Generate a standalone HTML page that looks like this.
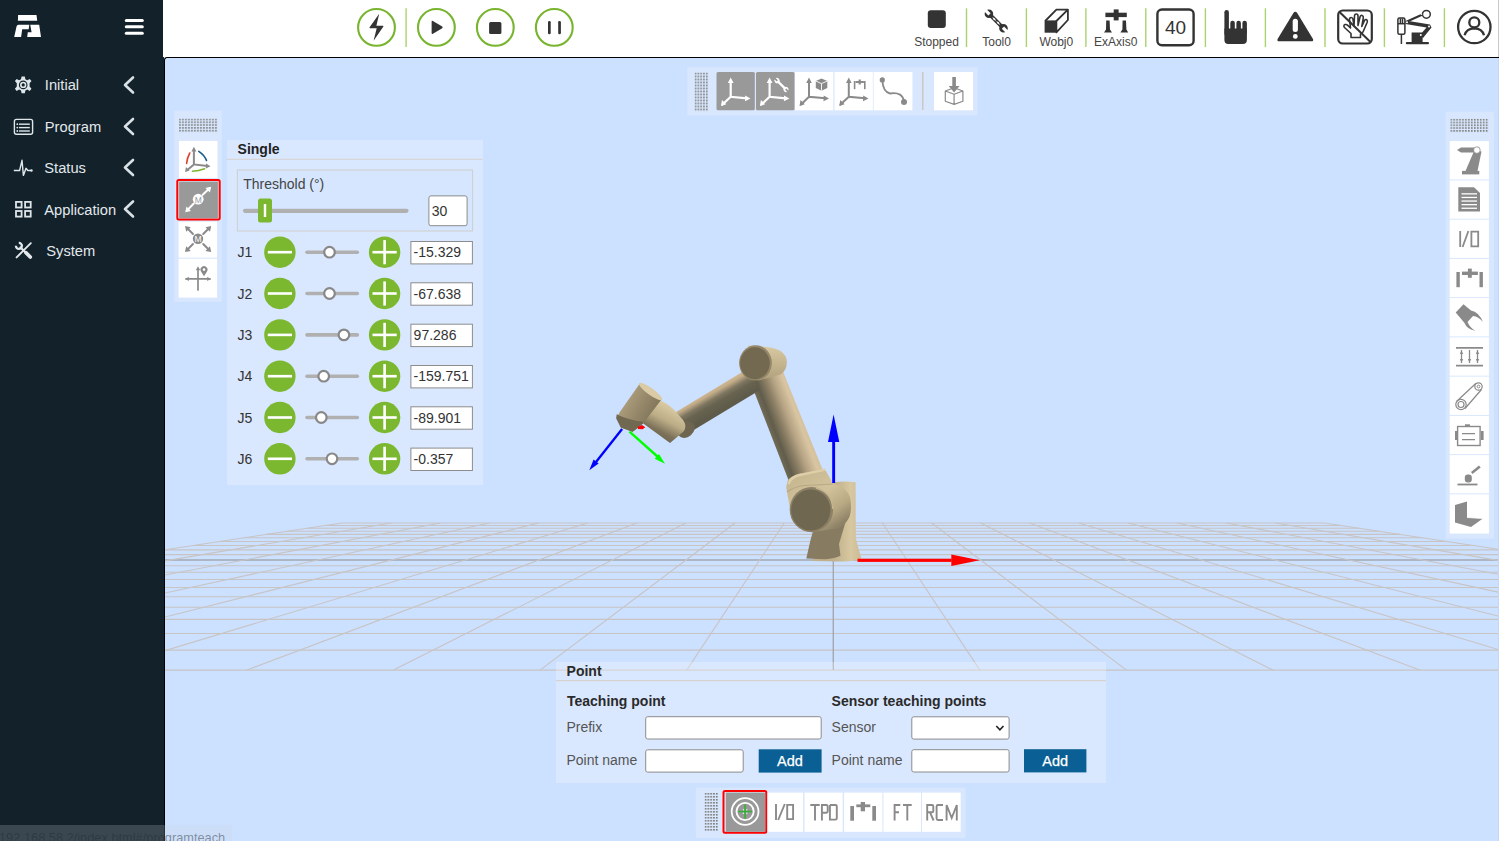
<!DOCTYPE html>
<html><head><meta charset="utf-8">
<style>
*{margin:0;padding:0;box-sizing:border-box}
html,body{width:1500px;height:841px;overflow:hidden;background:#fff;font-family:"Liberation Sans",sans-serif}
.abs{position:absolute}
svg{font-family:"Liberation Sans",sans-serif}
#side{position:absolute;left:0;top:0;width:164px;height:841px;background:#12212a}
#canvas{position:absolute;left:164px;top:57px;width:1335px;height:784px;background:#cce0ff;border-top:1px solid #000;border-left:1px solid #000;border-top-left-radius:3px}
</style></head><body>
<!-- SIDEBAR -->
<div id="side">
<svg class="abs" style="left:0;top:0" width="163" height="841">
 <g fill="#fff">
  <path d="M18.1,15.1 L36.5,15.1 L37.2,20.7 L17.9,20.7 Z"/>
  <path d="M14.2,37 L16.6,26.2 Q16.9,24.7 18.5,24.7 L29.3,24.7 L28.7,29.3 L22.2,29.3 L21.1,37 Z"/>
  <path d="M30.2,24.7 L39.2,24.7 L41,37 L27.2,37 L27.8,32.2 L31.6,32.2 Z"/>
 </g>
 <g stroke="#fff" stroke-width="3" stroke-linecap="round">
  <line x1="126.3" y1="20.4" x2="142.3" y2="20.4"/>
  <line x1="126.3" y1="26.8" x2="142.3" y2="26.8"/>
  <line x1="126.3" y1="33.3" x2="142.3" y2="33.3"/>
 </g>
 <g fill="none" stroke="#d9e1e6" stroke-width="2.6" stroke-linecap="round" stroke-linejoin="round">
  <polyline points="133,77.5 125,85 133,92.5"/>
  <polyline points="133,119 125,126.5 133,134"/>
  <polyline points="133,160 125,167.5 133,175"/>
  <polyline points="133,201.5 125,209 133,216.5"/>
 </g>
 <!-- gear -->
 <g transform="translate(23.2,84.9)" fill="#dfe6ea">
  <path id="gearp" d="M-1.6,-8.3 L1.6,-8.3 L2.2,-5.6 L4.1,-4.6 L6.5,-6 L8.3,-3.9 L6.4,-1.7 L6.4,1.7 L8.3,3.9 L6.5,6 L4.1,4.6 L2.2,5.6 L1.6,8.3 L-1.6,8.3 L-2.2,5.6 L-4.1,4.6 L-6.5,6 L-8.3,3.9 L-6.4,1.7 L-6.4,-1.7 L-8.3,-3.9 L-6.5,-6 L-4.1,-4.6 L-2.2,-5.6 Z"/>
  <circle r="4.3" fill="#12212a"/>
  <circle r="3.2" fill="#dfe6ea"/>
  <circle r="1.6" fill="#12212a"/>
 </g>
 <!-- program -->
 <g fill="none" stroke="#dfe6ea" stroke-width="1.4">
  <rect x="14.4" y="119.4" width="18.2" height="14.9" rx="2"/>
  <line x1="19" y1="124.2" x2="29.8" y2="124.2"/>
  <line x1="19" y1="127.6" x2="29.8" y2="127.6"/>
  <line x1="19" y1="131" x2="29.8" y2="131"/>
 </g>
 <g fill="#dfe6ea"><circle cx="17.3" cy="124.2" r="0.9"/><circle cx="17.3" cy="127.6" r="0.9"/><circle cx="17.3" cy="131" r="0.9"/></g>
 <!-- status -->
 <polyline fill="none" stroke="#dfe6ea" stroke-width="1.4" stroke-linejoin="round" points="13.8,170.5 19.6,170.5 22,160.3 23.4,175.4 26,168.3 27.8,170.5 31.5,170.5"/>
 <circle cx="31.5" cy="170.5" r="1.2" fill="#dfe6ea"/>
 <!-- application -->
 <g fill="none" stroke="#dfe6ea" stroke-width="1.8">
  <rect x="16" y="201.9" width="5.6" height="5.6"/>
  <rect x="25.1" y="201.9" width="5.6" height="5.6"/>
  <rect x="16" y="211" width="5.6" height="5.6"/>
  <rect x="25.1" y="211" width="5.6" height="5.6"/>
 </g>
 <!-- system tools -->
 <g stroke="#e2e8ec" stroke-linecap="round" fill="none">
  <line x1="30.8" y1="243.2" x2="16.6" y2="257.4" stroke-width="1.9"/>
  <line x1="20.5" y1="247.5" x2="30.5" y2="257.3" stroke-width="2.2"/>
  <line x1="25.8" y1="252.6" x2="30.3" y2="257.1" stroke-width="3.6"/>
 </g>
 <path d="M15.9,245.8 A3,3 0 1 0 18.8,242.9" fill="none" stroke="#e2e8ec" stroke-width="2.3"/>
 <g font-size="14.7" fill="#e2e8ec">
  <text x="44.8" y="90.3">Initial</text>
  <text x="44.8" y="131.7">Program</text>
  <text x="44.3" y="172.7">Status</text>
  <text x="44.3" y="214.8">Application</text>
  <text x="46.3" y="255.6">System</text>
 </g>
</svg>
</div>
<!-- TOPBAR -->
<svg class="abs" style="left:0;top:0" width="1500" height="57">
 <rect x="163" y="0" width="1337" height="57" fill="#fff"/>
 <line x1="1498.5" y1="0" x2="1498.5" y2="57" stroke="#c8c8c8" stroke-width="1"/>
 <g fill="none" stroke="#78b42e" stroke-width="2.1">
  <circle cx="376.5" cy="27.4" r="18.4"/>
  <circle cx="436.4" cy="27.4" r="18.4"/>
  <circle cx="495.3" cy="27.4" r="18.4"/>
  <circle cx="554.3" cy="27.4" r="18.4"/>
 </g>
 <g stroke="#a9d36e" stroke-width="1.4">
  <line x1="406.1" y1="8.2" x2="406.1" y2="47"/>
  <line x1="966.5" y1="8.3" x2="966.5" y2="47.1"/>
  <line x1="1026.4" y1="8.3" x2="1026.4" y2="47.1"/>
  <line x1="1085.9" y1="8.3" x2="1085.9" y2="47.1"/>
  <line x1="1145.8" y1="8.3" x2="1145.8" y2="47.1"/>
  <line x1="1205.4" y1="8.3" x2="1205.4" y2="47.1"/>
  <line x1="1265.4" y1="8.3" x2="1265.4" y2="47.1"/>
  <line x1="1325" y1="8.3" x2="1325" y2="47.1"/>
  <line x1="1384.4" y1="8.3" x2="1384.4" y2="47.1"/>
  <line x1="1444.4" y1="8.3" x2="1444.4" y2="47.1"/>
 </g>
 <g fill="#333">
  <path d="M379.2,13.8 L369.6,27.2 Q369.1,28.2 370.3,28.2 L376.7,28.2 L373.6,40.7 L383.4,26.6 Q383.9,25.7 382.7,25.7 L376.4,25.7 Z"/>
  <path d="M431.6,21.7 Q431.6,20.3 432.9,21 L442.2,26.6 Q443.2,27.4 442.2,28.2 L432.9,33.8 Q431.6,34.5 431.6,33.1 Z"/>
  <rect x="489.1" y="21.9" width="12.3" height="12.2" rx="1.5"/>
  <rect x="548" y="21" width="2.7" height="13.2" rx="1.3"/>
  <rect x="558.2" y="21" width="2.7" height="13.2" rx="1.3"/>
  <rect x="927.8" y="10.3" width="18" height="17.6" rx="3"/>
 </g>
 <g font-size="12" fill="#454545" text-anchor="middle">
  <text x="936.5" y="45.5">Stopped</text>
  <text x="996.6" y="45.5">Tool0</text>
  <text x="1056.3" y="45.5">Wobj0</text>
  <text x="1115.8" y="45.5">ExAxis0</text>
 </g>
 <!-- wrench -->
 <g transform="translate(996.2,21) rotate(-45)">
  <g fill="#333">
   <rect x="-1.9" y="-9" width="3.8" height="18"/>
   <circle cx="0" cy="-10.3" r="4.3"/>
   <circle cx="0" cy="10.3" r="4.3"/>
  </g>
  <g fill="#fff">
   <rect x="-1.6" y="-15.5" width="3.2" height="6"/>
   <rect x="-1.6" y="9.5" width="3.2" height="6"/>
   <path d="M0,-5.5 L0.9,-2.8 L0,0 L-0.9,-2.8 Z M0,0 L0.9,2.8 L0,5.5 L-0.9,2.8 Z"/>
  </g>
 </g>
 <!-- wobj box -->
 <g stroke="#333" stroke-width="1.8" fill="none" stroke-linejoin="round">
  <path d="M1045.2,21 L1056.4,9.6 L1067.9,9.6 L1067.9,20 L1056.4,32.3 L1056.4,21 L1067.9,9.6"/>
 </g>
 <rect x="1044.6" y="20.4" width="12.3" height="12.3" fill="#333"/>
 <!-- exaxis -->
 <g fill="#333">
  <rect x="1105.4" y="12.7" width="21.4" height="4.4"/>
  <rect x="1113.7" y="9.4" width="4.9" height="11"/>
  <path d="M1106.2,20.5 L1109.6,20.5 L1110,29.5 L1112,32.6 L1104,32.6 L1106,29.5 Z"/>
  <path d="M1122.6,20.5 L1126,20.5 L1126.4,29.5 L1128.2,32.6 L1120.4,32.6 L1122.4,29.5 Z"/>
 </g>
 <!-- 40 box -->
 <rect x="1157.4" y="9.5" width="36.2" height="35.8" rx="4.5" fill="none" stroke="#333" stroke-width="2.4"/>
 <text x="1175.5" y="33.6" font-size="19" fill="#333" text-anchor="middle">40</text>
 <!-- hand -->
 <g fill="#333">
  <rect x="1224.4" y="10" width="4.5" height="26" rx="2.2"/>
  <rect x="1230.3" y="20.8" width="4.5" height="14" rx="2.2"/>
  <rect x="1236.4" y="20.8" width="4.5" height="14" rx="2.2"/>
  <rect x="1242.4" y="20.8" width="4.5" height="14" rx="2.2"/>
  <path d="M1224.4,28.5 L1246.9,28.5 L1246.9,40 Q1246.9,44 1242.9,44 L1228.4,44 Q1224.4,44 1224.4,40 Z"/>
 </g>
 <!-- warning -->
 <path d="M1295.3,11.8 Q1296.4,11.8 1297.2,13 L1313,39 Q1313.8,41.3 1311.5,41.3 L1279,41.3 Q1276.7,41.3 1277.6,39 L1293.4,13 Q1294.2,11.8 1295.3,11.8 Z" fill="#333"/>
 <rect x="1292.7" y="18.8" width="5.2" height="13.2" rx="2.5" fill="#fff"/>
 <circle cx="1295.3" cy="36.4" r="2.4" fill="#fff"/>
 <!-- no hand -->
 <g fill="none" stroke="#333" stroke-linejoin="round">
  <rect x="1338.2" y="10.5" width="33.6" height="33" rx="4.5" stroke-width="2.2"/>
  <line x1="1339.5" y1="12" x2="1370.5" y2="42" stroke-width="2"/>
  <path d="M1351,37.5 L1351,33.5 L1344.5,27.5 Q1343,25.5 1345,24.6 Q1346.5,24 1348,25.6 L1350.5,28 L1349.5,19.5 Q1349.5,17.5 1351.2,17.5 Q1352.8,17.5 1353,19.5 L1354,26 L1354.5,16 Q1354.6,14 1356.3,14 Q1358,14 1358,16 L1358,25.5 L1360,17 Q1360.5,15 1362.2,15.5 Q1363.6,16 1363.3,18 L1361.8,26.5 L1364.5,20.5 Q1365.5,19 1366.8,19.8 Q1367.8,20.6 1367.2,22.2 L1363,32 L1360.5,34 L1360.5,37.5 Z" stroke-width="1.6"/>
 </g>
 <!-- robot teach -->
 <g fill="none" stroke="#333" stroke-width="1.5">
  <rect x="1397.9" y="18" width="7" height="16.2" rx="1.5"/>
  <line x1="1397.9" y1="23.7" x2="1404.9" y2="23.7"/>
  <line x1="1400.4" y1="18.5" x2="1400.4" y2="23.5"/>
  <line x1="1402.5" y1="18.5" x2="1402.5" y2="23.5"/>
  <line x1="1401.4" y1="34.2" x2="1401.4" y2="44"/>
  <circle cx="1426.4" cy="14.3" r="3.9"/>
  <line x1="1407" y1="21.5" x2="1422.5" y2="14.5" stroke-width="2"/>
 </g>
 <g fill="#333">
  <rect x="1405.8" y="42" width="23.2" height="2.2" rx="1"/>
  <rect x="1411.6" y="32.5" width="11" height="10"/>
  <path d="M1405.5,20.5 L1430,24.5 L1431.5,27.5 L1423,38 L1419.5,35.5 L1426.5,27.5 L1405.5,24 Z"/>
 </g>
 <g fill="#fff"><circle cx="1407" cy="22.2" r="1"/><circle cx="1429" cy="26.5" r="1"/><circle cx="1420.8" cy="35" r="1"/><circle cx="1421.5" cy="14.3" r="0.8"/></g>
 <!-- user -->
 <g fill="none" stroke="#333" stroke-width="2.3">
  <circle cx="1474.3" cy="27" r="16.2"/>
  <circle cx="1474.3" cy="22.4" r="5"/>
  <path d="M1464.6,35.2 Q1466.5,28.6 1474.3,28.4 Q1482.1,28.6 1484,35.2"/>
 </g>
</svg>
<!-- CANVAS -->
<div id="canvas"></div>
<div class="abs" style="left:1498px;top:58px;width:1px;height:783px;background:#c3d6f5"></div>
<svg class="abs" style="left:0;top:0" width="1500" height="841">
 <defs><clipPath id="cv"><rect x="165" y="58" width="1333" height="783"/></clipPath></defs>
 <g clip-path="url(#cv)">
<line x1="342.0" y1="523.02" x2="1324.6" y2="523.02" stroke="#c7c4c3" stroke-width="1.1"/>
<line x1="325.1" y1="525.57" x2="1341.5" y2="525.57" stroke="#c7c4c3" stroke-width="1.1"/>
<line x1="307.0" y1="528.30" x2="1359.6" y2="528.30" stroke="#c7c4c3" stroke-width="1.1"/>
<line x1="287.6" y1="531.23" x2="1379.0" y2="531.23" stroke="#c7c4c3" stroke-width="1.1"/>
<line x1="266.7" y1="534.39" x2="1399.9" y2="534.39" stroke="#c7c4c3" stroke-width="1.1"/>
<line x1="244.1" y1="537.80" x2="1422.5" y2="537.80" stroke="#c7c4c3" stroke-width="1.1"/>
<line x1="219.6" y1="541.49" x2="1447.0" y2="541.49" stroke="#c7c4c3" stroke-width="1.1"/>
<line x1="193.0" y1="545.50" x2="1473.6" y2="545.50" stroke="#c7c4c3" stroke-width="1.1"/>
<line x1="164.0" y1="549.88" x2="1502.6" y2="549.88" stroke="#c7c4c3" stroke-width="1.1"/>
<line x1="132.3" y1="554.67" x2="1534.3" y2="554.67" stroke="#c7c4c3" stroke-width="1.1"/>
<line x1="97.3" y1="559.94" x2="1569.3" y2="559.94" stroke="#a3a8b0" stroke-width="1.6"/>
<line x1="58.8" y1="565.76" x2="1607.8" y2="565.76" stroke="#c7c4c3" stroke-width="1.1"/>
<line x1="15.9" y1="572.22" x2="1650.7" y2="572.22" stroke="#c7c4c3" stroke-width="1.1"/>
<line x1="-31.9" y1="579.44" x2="1698.5" y2="579.44" stroke="#c7c4c3" stroke-width="1.1"/>
<line x1="-85.7" y1="587.56" x2="1752.3" y2="587.56" stroke="#c7c4c3" stroke-width="1.1"/>
<line x1="-146.7" y1="596.75" x2="1813.3" y2="596.75" stroke="#c7c4c3" stroke-width="1.1"/>
<line x1="-216.3" y1="607.25" x2="1882.9" y2="607.25" stroke="#c7c4c3" stroke-width="1.1"/>
<line x1="-296.5" y1="619.36" x2="1963.1" y2="619.36" stroke="#c7c4c3" stroke-width="1.1"/>
<line x1="-390.0" y1="633.46" x2="2056.6" y2="633.46" stroke="#c7c4c3" stroke-width="1.1"/>
<line x1="-500.4" y1="650.12" x2="2167.0" y2="650.12" stroke="#c7c4c3" stroke-width="1.1"/>
<line x1="-632.7" y1="670.08" x2="2299.3" y2="670.08" stroke="#c7c4c3" stroke-width="1.1"/>
<line x1="342.0" y1="523.02" x2="-632.7" y2="670.08" stroke="#c7c4c3" stroke-width="1.1"/>
<line x1="391.1" y1="523.02" x2="-486.1" y2="670.08" stroke="#c7c4c3" stroke-width="1.1"/>
<line x1="440.3" y1="523.02" x2="-339.5" y2="670.08" stroke="#c7c4c3" stroke-width="1.1"/>
<line x1="489.4" y1="523.02" x2="-192.9" y2="670.08" stroke="#c7c4c3" stroke-width="1.1"/>
<line x1="538.5" y1="523.02" x2="-46.3" y2="670.08" stroke="#c7c4c3" stroke-width="1.1"/>
<line x1="587.7" y1="523.02" x2="100.3" y2="670.08" stroke="#c7c4c3" stroke-width="1.1"/>
<line x1="636.8" y1="523.02" x2="246.9" y2="670.08" stroke="#c7c4c3" stroke-width="1.1"/>
<line x1="685.9" y1="523.02" x2="393.5" y2="670.08" stroke="#c7c4c3" stroke-width="1.1"/>
<line x1="735.0" y1="523.02" x2="540.1" y2="670.08" stroke="#c7c4c3" stroke-width="1.1"/>
<line x1="784.2" y1="523.02" x2="686.7" y2="670.08" stroke="#c7c4c3" stroke-width="1.1"/>
<line x1="882.4" y1="523.02" x2="979.9" y2="670.08" stroke="#c7c4c3" stroke-width="1.1"/>
<line x1="931.6" y1="523.02" x2="1126.5" y2="670.08" stroke="#c7c4c3" stroke-width="1.1"/>
<line x1="980.7" y1="523.02" x2="1273.1" y2="670.08" stroke="#c7c4c3" stroke-width="1.1"/>
<line x1="1029.8" y1="523.02" x2="1419.7" y2="670.08" stroke="#c7c4c3" stroke-width="1.1"/>
<line x1="1078.9" y1="523.02" x2="1566.3" y2="670.08" stroke="#c7c4c3" stroke-width="1.1"/>
<line x1="1128.1" y1="523.02" x2="1712.9" y2="670.08" stroke="#c7c4c3" stroke-width="1.1"/>
<line x1="1177.2" y1="523.02" x2="1859.5" y2="670.08" stroke="#c7c4c3" stroke-width="1.1"/>
<line x1="1226.3" y1="523.02" x2="2006.1" y2="670.08" stroke="#c7c4c3" stroke-width="1.1"/>
<line x1="1275.5" y1="523.02" x2="2152.7" y2="670.08" stroke="#c7c4c3" stroke-width="1.1"/>
<line x1="1324.6" y1="523.02" x2="2299.3" y2="670.08" stroke="#c7c4c3" stroke-width="1.1"/>
<line x1="833.3" y1="523.02" x2="833.3" y2="670.08" stroke="#a3a8b0" stroke-width="1.4"/>

<defs>
 <linearGradient id="gUA" gradientUnits="userSpaceOnUse" x1="765" y1="426" x2="802" y2="412">
  <stop offset="0" stop-color="#77705a"/><stop offset="0.2" stop-color="#615d4b"/><stop offset="0.42" stop-color="#8d8066"/><stop offset="0.6" stop-color="#b4a283"/><stop offset="0.85" stop-color="#d9c5a1"/><stop offset="1" stop-color="#d2bf9b"/>
 </linearGradient>
 <linearGradient id="gFA" gradientUnits="userSpaceOnUse" x1="711" y1="388" x2="723" y2="409">
  <stop offset="0" stop-color="#d7bf98"/><stop offset="0.22" stop-color="#c2ab87"/><stop offset="0.45" stop-color="#7d7560"/><stop offset="0.65" stop-color="#67634f"/><stop offset="1" stop-color="#5e5b4a"/>
 </linearGradient>
 <linearGradient id="gBase" gradientUnits="userSpaceOnUse" x1="834" y1="0" x2="862" y2="0">
  <stop offset="0" stop-color="#c0b08b"/><stop offset="0.6" stop-color="#d8c8a1"/><stop offset="1" stop-color="#cbbb94"/>
 </linearGradient>
 <linearGradient id="gSH" gradientUnits="userSpaceOnUse" x1="800" y1="478" x2="835" y2="528">
  <stop offset="0" stop-color="#c9b992"/><stop offset="0.4" stop-color="#d3c39c"/><stop offset="0.75" stop-color="#b8a983"/><stop offset="1" stop-color="#8e8267"/>
 </linearGradient>
 <linearGradient id="gEl" gradientUnits="userSpaceOnUse" x1="0" y1="346" x2="0" y2="378">
  <stop offset="0" stop-color="#d9c9a2"/><stop offset="1" stop-color="#b3a47f"/>
 </linearGradient>
 <linearGradient id="gW1" gradientUnits="userSpaceOnUse" x1="668" y1="404" x2="652" y2="435">
  <stop offset="0" stop-color="#dccca4"/><stop offset="0.45" stop-color="#bcad87"/><stop offset="0.8" stop-color="#7d7259"/><stop offset="1" stop-color="#6f6751"/>
 </linearGradient>
 <linearGradient id="gW2" gradientUnits="userSpaceOnUse" x1="624" y1="396" x2="652" y2="412">
  <stop offset="0" stop-color="#b1a27f"/><stop offset="0.5" stop-color="#9a8c6d"/><stop offset="1" stop-color="#85795e"/>
 </linearGradient>
</defs>
<!-- base column -->
<path d="M833.7,482.3 Q844.5,480.8 855.6,482.3 L855.8,538 Q858.5,549 861.2,557.5 Q860,561.3 840,561.6 L812,561 L830,540 Z" fill="url(#gBase)"/>
<!-- neck -->
<path d="M806.3,558.5 L810.5,540 L813,531 L846,520.5 L839,544 L840.5,555.8 Q835,558.5 825,559.3 Z" fill="#877c61"/>
<!-- upper arm -->
<path d="M745.8,370 L782.4,370 L826,478 L790,484 Z" fill="url(#gUA)"/>
<!-- housing + collar -->
<path d="M786.2,487.6 L787.5,481 Q790,476 800,473.5 L824.7,469 L833.2,483.8 Q846,486 850.3,498 Q852,510 849.4,517 Q845,526 837,528.4 L812,532 L792,520 Z" fill="url(#gSH)"/>
<path d="M788.5,484 Q791,476.5 801,474.8 L825.5,469.6" fill="none" stroke="#dfcfa9" stroke-width="2.4"/>
<path d="M787,492 Q795,486 806,485.5 L833,484" fill="none" stroke="#a89a78" stroke-width="1.2" opacity="0.6"/>
<!-- shoulder disk -->
<ellipse cx="811.4" cy="509.6" rx="21.7" ry="22.6" fill="#8c8066"/>
<ellipse cx="810.8" cy="510" rx="19.6" ry="20.6" fill="#6f6750"/>
<path d="M816,488 Q832,492 832.8,509" fill="none" stroke="#c7b791" stroke-width="1.3"/>
<!-- forearm -->
<path d="M674,413.2 L748,368.6 L760,390 L688,433.5 Z" fill="url(#gFA)"/>
<!-- elbow housing -->
<path d="M748,345.4 L768.6,347.2 Q785.5,349.5 786.9,361 Q787,371 780.5,374.5 L758,380.5 Z" fill="url(#gEl)"/>
<ellipse cx="755.5" cy="362.9" rx="16.4" ry="17.7" fill="#95876a"/>
<ellipse cx="754.9" cy="363.2" rx="14.8" ry="16" fill="#726950"/>
<!-- wrist1 -->
<ellipse cx="686" cy="429.5" rx="9.5" ry="7.5" transform="rotate(-40 686 429.5)" fill="#6e6550"/>
<path d="M643.3,399.5 L660,400.3 Q669,404 675.8,411.7 L683,420 Q687.5,426 683.5,431.5 L676,438 L670,443 L643.3,423.5 Z" fill="url(#gW1)"/>
<!-- wrist2 -->
<path d="M640,383.3 L661.7,399.2 L643.3,423.3 L635,430 L632.5,431.7 L620.8,427.5 L616.2,418.3 L620,411.7 Z" fill="url(#gW2)"/>
<path d="M616.7,414.2 Q628,420 643.3,421.7 L643.3,423.3 L635,430 L632.5,431.7 L620.8,427.5 L616.2,418.3 Z" fill="#716851"/>
<ellipse cx="650.6" cy="391.5" rx="14" ry="3.4" transform="rotate(36 650.6 391.5)" fill="#dbcba4"/>
<!-- tcp axes -->
<line x1="622.1" y1="429" x2="596" y2="462" stroke="#0000ff" stroke-width="2.3"/>
<path d="M589.3,470.3 L593.6,459.6 L598.6,463.6 Z" fill="#0000ff"/>
<line x1="629.5" y1="431.6" x2="658" y2="457" stroke="#00ff00" stroke-width="2.4"/>
<path d="M665,463.7 L654.6,458.7 L659,453.9 Z" fill="#00ff00"/>
<path d="M637.6,427 L642,425 L645.3,427.3 L642.5,429.3 L638,429 Z" fill="#ff0000"/>
<!-- base axes -->
<rect x="832.2" y="440" width="2.9" height="43" fill="#0000ff"/>
<path d="M833.6,414.5 L839.3,442 L828,442 Z" fill="#0000ff"/>
<rect x="857.5" y="558.7" width="94" height="3.2" fill="#ff0000"/>
<path d="M979.7,560.3 L951.3,554.5 L951.3,565.9 Z" fill="#ff0000"/>
 </g>
</svg>
<!-- PANELS -->
<svg class="abs" style="left:0;top:0" width="1500" height="841">
 <defs>
  <pattern id="gripH" x="179.2" y="118.6" width="3" height="2.8" patternUnits="userSpaceOnUse"><rect x="0" y="0" width="1.6" height="1.7" fill="#7e7e7e"/></pattern>
  <pattern id="gripR" x="1450.4" y="118.8" width="2.95" height="2.8" patternUnits="userSpaceOnUse"><rect x="0" y="0" width="1.6" height="1.7" fill="#7e7e7e"/></pattern>
  <pattern id="gripT" x="694.7" y="72.6" width="2.8" height="3" patternUnits="userSpaceOnUse"><rect x="0" y="0" width="1.7" height="1.6" fill="#7e7e7e"/></pattern>
  <pattern id="gripB" x="704.7" y="793" width="2.8" height="3" patternUnits="userSpaceOnUse"><rect x="0" y="0" width="1.7" height="1.6" fill="#7e7e7e"/></pattern>
 </defs>
 <!-- top toolbar -->
 <rect x="687.2" y="67.2" width="290.4" height="48.2" fill="#d8e7fd"/>
 <rect x="694.5" y="72.5" width="13.6" height="38.6" fill="url(#gripT)"/>
 <rect x="716.5" y="72" width="38.3" height="38.3" rx="1.5" fill="#999"/>
 <rect x="756" y="72" width="38.5" height="38.3" rx="1.5" fill="#999"/>
 <rect x="795" y="72" width="38.3" height="38.3" fill="#fff"/>
 <rect x="834.5" y="72" width="38.3" height="38.3" fill="#fff"/>
 <rect x="873.6" y="72" width="38.8" height="38.3" fill="#fff"/>
 <line x1="922.8" y1="72" x2="922.8" y2="110" stroke="#c9c3b9" stroke-width="1.3"/>
 <rect x="934" y="72" width="39.1" height="38.3" fill="#fff"/>
 <!-- axis icons -->
 <g stroke="#fff" stroke-width="2.2" fill="none" stroke-linecap="round">
  <path d="M730.7,81 L730.7,96.8 L747,98.3 M730.7,96.8 L722.5,104.5"/>
  <path d="M769.6,81 L769.6,96.8 L786,98.3 M769.6,96.8 L761.5,104.5"/>
 </g>
 <g fill="#fff">
  <path d="M730.7,77.5 L733.6,83 L727.8,83 Z M750.5,98.6 L745,101.3 L745.2,95.5 Z M721,106 L722,100 L726.3,104.2 Z"/>
  <path d="M769.6,77.5 L772.5,83 L766.7,83 Z M789.4,98.6 L783.9,101.3 L784.1,95.5 Z M759.9,106 L760.9,100 L765.2,104.2 Z"/>
 </g>
 <g transform="translate(781.5,85) rotate(-45)">
  <rect x="-1.1" y="-5.5" width="2.2" height="11" fill="#fff"/>
  <circle cx="0" cy="-6.3" r="2.6" fill="#fff"/>
  <circle cx="0" cy="6.3" r="2.6" fill="#fff"/>
  <rect x="-0.9" y="-9.5" width="1.8" height="3.6" fill="#999"/>
  <rect x="-0.9" y="5.9" width="1.8" height="3.6" fill="#999"/>
 </g>
 <g stroke="#8a8a8a" stroke-width="2" fill="none" stroke-linecap="round">
  <path d="M809,81 L809,96.8 L825.5,98.3 M809,96.8 L801,104.5"/>
  <path d="M848.8,81 L848.8,96.8 L865,98.3 M848.8,96.8 L840.5,104.5"/>
 </g>
 <g fill="#8a8a8a">
  <path d="M809,77.5 L811.8,83 L806.2,83 Z M829,98.6 L823.5,101.2 L823.7,95.6 Z M799.5,106 L800.5,100 L804.8,104.2 Z"/>
  <path d="M848.8,77.5 L851.6,83 L846,83 Z M868.5,98.6 L863,101.2 L863.2,95.6 Z M839.3,106 L840.3,100 L844.6,104.2 Z"/>
  <path d="M815.8,81 L821.5,78.6 L827.3,81 L827.3,88 L821.5,90.7 L815.8,88 Z"/>
 </g>
 <path d="M815.8,81 L821.5,83.6 L827.3,81 M821.5,83.6 L821.5,90.7" stroke="#fff" stroke-width="0.9" fill="none"/>
 <g fill="#8a8a8a">
  <rect x="853.8" y="81" width="1.6" height="8.2"/>
  <rect x="864" y="81" width="1.6" height="8.2"/>
  <rect x="855.5" y="81" width="8.4" height="2"/>
  <rect x="858.6" y="79.5" width="2.2" height="5"/>
 </g>
 <path d="M882.3,80 Q883,92 890,93.5 Q903,91.5 904,102" fill="none" stroke="#8a8a8a" stroke-width="1.8"/>
 <circle cx="882.3" cy="79.9" r="2.6" fill="#8a8a8a"/>
 <circle cx="904" cy="102" r="3" fill="#8a8a8a"/>
 <g fill="none" stroke="#8a8a8a" stroke-width="1.2" stroke-linejoin="round">
  <path d="M945.3,91 L954.1,87.8 L962.9,91 L962.9,101.2 L954.1,104.4 L945.3,101.2 Z M945.3,91 L954.1,94.3 L962.9,91 M954.1,94.3 L954.1,104.4"/>
 </g>
 <path d="M952.3,77 L955.9,77 L955.9,86 L959.5,86 L954.1,92.5 L948.7,86 L952.3,86 Z" fill="#8a8a8a"/>

 <!-- left tool panel -->
 <rect x="174.3" y="110.7" width="47.6" height="191.2" fill="#d8e7fd"/>
 <rect x="179" y="118.5" width="38.6" height="13.6" fill="url(#gripH)"/>
 <rect x="179" y="140.9" width="38.5" height="37" fill="#fff"/>
 <rect x="177.3" y="180.1" width="42.4" height="39.5" rx="1.5" fill="#dfe9f7" stroke="#ff0000" stroke-width="2"/>
 <rect x="179.1" y="181.6" width="38.8" height="36.6" fill="#999"/>
 <rect x="178.6" y="221.6" width="38.5" height="36" fill="#fff"/>
 <rect x="178.6" y="258.7" width="38.5" height="38.9" fill="#fff"/>
 <g stroke="#8a8a8a" stroke-width="2" fill="none" stroke-linecap="round">
  <path d="M193.9,150 L193.9,164.4 L207.5,165.9 M193.9,164.4 L187,170.3"/>
 </g>
 <g fill="#8a8a8a"><path d="M193.9,146.8 L196.4,151.5 L191.4,151.5 Z M210.5,166.2 L205.8,168.5 L206,163.5 Z M185,172 L186,167 L189.5,170.5 Z"/></g>
 <path d="M189.8,153 Q187,158 186.6,163.5" fill="none" stroke="#d9452b" stroke-width="1.6" stroke-linecap="round"/>
 <path d="M198.8,151.3 Q204.5,155 206.5,160.5" fill="none" stroke="#1a5e8e" stroke-width="1.6" stroke-linecap="round"/>
 <path d="M192.5,171.3 Q199,171.2 204.5,168.8" fill="none" stroke="#7ab62f" stroke-width="1.6" stroke-linecap="round"/>
 <g stroke="#fff" stroke-width="1.9" stroke-linecap="round">
  <line x1="187" y1="210.5" x2="193.8" y2="203.5"/>
  <line x1="202.7" y1="194.8" x2="209.5" y2="188.3"/>
 </g>
 <g fill="#fff"><path d="M185.2,212.3 L186.5,206.5 L191,211 Z M211.2,186.7 L209.9,192.5 L205.4,188 Z"/></g>
 <circle cx="198.2" cy="199.2" r="5.4" fill="#fff"/>
 <text x="198.2" y="202.6" font-size="8.5" fill="#999" text-anchor="middle">M</text>
 <g stroke="#8a8a8a" stroke-width="1.9" stroke-linecap="round">
  <line x1="187.5" y1="228.5" x2="193" y2="234"/>
  <line x1="208.7" y1="228.5" x2="203.2" y2="234"/>
  <line x1="187.5" y1="249.5" x2="193" y2="244"/>
  <line x1="208.7" y1="249.5" x2="203.2" y2="244"/>
 </g>
 <g fill="#8a8a8a">
  <path d="M185,226 L190.8,227.2 L186.2,231.8 Z M211.2,226 L205.4,227.2 L210,231.8 Z M185,252.1 L190.8,250.9 L186.2,246.3 Z M211.2,252.1 L205.4,250.9 L210,246.3 Z"/>
  <circle cx="198" cy="238.8" r="5.2"/>
 </g>
 <text x="198" y="242.2" font-size="8.5" fill="#fff" text-anchor="middle">M</text>
 <g stroke="#8a8a8a" stroke-width="1.7" stroke-linecap="round">
  <line x1="198" y1="268.5" x2="198" y2="290"/>
  <line x1="186" y1="278.9" x2="210" y2="278.9"/>
 </g>
 <g fill="#8a8a8a"><path d="M198,266.3 L200.2,270.3 L195.8,270.3 Z M185.3,278.9 L188.8,276.8 L188.8,281 Z M210.7,278.9 L207.2,276.8 L207.2,281 Z"/>
  <path d="M204,276.3 L201,271.5 A3.5,3.5 0 1 1 207,271.5 Z"/></g>
 <circle cx="204" cy="269.6" r="1.3" fill="#fff"/>

 <!-- right toolbar -->
 <rect x="1445.7" y="111.6" width="48.3" height="427" fill="#d8e7fd"/>
 <rect x="1450.3" y="118.7" width="38" height="13.6" fill="url(#gripR)"/>
 <g fill="#fff">
  <rect x="1449.7" y="141.1" width="39.2" height="38.3"/>
  <rect x="1449.7" y="180.4" width="39.2" height="38.3"/>
  <rect x="1449.7" y="219.6" width="39.2" height="38.3"/>
  <rect x="1449.7" y="258.9" width="39.2" height="38.3"/>
  <rect x="1449.7" y="298.1" width="39.2" height="38.3"/>
  <rect x="1449.7" y="337.4" width="39.2" height="38.3"/>
  <rect x="1449.7" y="376.6" width="39.2" height="38.3"/>
  <rect x="1449.7" y="415.9" width="39.2" height="38.3"/>
  <rect x="1449.7" y="455.1" width="39.2" height="38.3"/>
  <rect x="1449.7" y="494.4" width="39.2" height="39.2"/>
 </g>
 <g fill="#8a8a8a">
  <!-- robot -->
  <rect x="1462" y="170.9" width="17.3" height="3.5"/>
  <path d="M1465.5,171 L1474.5,150 L1481.5,151.5 L1477.5,171 Z"/>
  <path d="M1457,150 L1461,147.5 L1477,147.5 L1477,152.6 L1461,152.6 Z"/>
  <!-- doc -->
  <path d="M1458.3,187.3 L1474,187.3 L1480,193 L1480,211.6 L1458.3,211.6 Z"/>
  <!-- exaxis -->
  <rect x="1456.4" y="272" width="3.4" height="15.2"/>
  <rect x="1479.5" y="272" width="3.4" height="15.2"/>
  <rect x="1462" y="271.6" width="15.9" height="3.4"/>
  <rect x="1467.9" y="268.6" width="3.9" height="9.2"/>
  <!-- gripper -->
  <path d="M1455.7,312.5 L1463.5,304.3 L1471,310.5 Q1479,312 1482.9,322 Q1478.5,316.5 1473,316 L1467.5,322 Q1470,328 1475.5,330.7 Q1467,329.5 1464.5,323 L1462,320 Z"/>
  <!-- belt base line -->
  <rect x="1464.8" y="474.5" width="7" height="8" rx="3"/>
  <rect x="1457.5" y="483.6" width="20" height="1.8"/>
  <path d="M1471,472 L1479,465.5 L1480.7,467.5 L1472.5,474 Z"/>
  <path d="M1455,505 L1467,501.4 L1467,517.5 L1482.9,518.5 L1471,527.1 L1455,522.5 Z"/>
 </g>
 <g fill="#fff">
  <circle cx="1476.9" cy="150.1" r="3.3" stroke="#8a8a8a" stroke-width="0.8"/>
  <rect x="1461.5" y="193.2" width="15.5" height="1.3"/>
  <rect x="1461.5" y="196.8" width="15.5" height="1.3"/>
  <rect x="1461.5" y="200.4" width="15.5" height="1.3"/>
  <rect x="1461.5" y="204" width="15.5" height="1.3"/>
  <rect x="1461.5" y="207.6" width="15.5" height="1.3"/>
 </g>
 <path d="M1467,517.5 L1482.9,518.5" stroke="#fff" stroke-width="0.8"/>
 <g fill="none" stroke="#8a8a8a" stroke-width="1.5">
  <path d="M1460.2,231 L1460.2,247 M1462.6,247 L1468.4,231 M1471.4,231.7 L1478.2,231.7 L1478.2,246.3 L1471.4,246.3 Z" stroke-width="1.8"/>
  <path d="M1456,347.8 L1483,347.8 M1456,365.6 L1483,365.6" stroke-width="1.8"/>
  <path d="M1461.5,350 L1461.5,363 M1469.5,350 L1469.5,363 M1477.5,350 L1477.5,363" stroke-width="1.3"/>
  <circle cx="1461" cy="404.5" r="5.2" stroke-width="1.2"/>
  <circle cx="1461" cy="404.5" r="3" stroke-width="1.2"/>
  <circle cx="1478.5" cy="386.5" r="3.7" stroke-width="1.2"/>
  <circle cx="1478.5" cy="386.5" r="1.4" stroke-width="1"/>
  <path d="M1456.5,401.5 L1476,383.2 M1465,408.5 L1481.5,389.5" stroke-width="1.2"/>
  <rect x="1457.6" y="426.5" width="22.5" height="19" stroke-width="1.4"/>
  <path d="M1462,433.6 L1475,433.6 M1462,439.6 L1475,439.6" stroke-width="1.4"/>
 </g>
 <g fill="#8a8a8a">
  <path d="M1461.5,362.6 L1459.8,359 L1463.2,359 Z M1461.5,350.5 L1459.8,354 L1463.2,354 Z M1469.5,362.6 L1467.8,359 L1471.2,359 Z M1477.5,362.6 L1475.8,359 L1479.2,359 Z M1477.5,350.5 L1475.8,354 L1479.2,354 Z"/>
  <rect x="1455" y="431" width="2" height="9"/>
  <rect x="1481" y="431" width="2.6" height="9"/>
  <rect x="1465" y="424.3" width="5" height="2"/>
 </g>

 <!-- bottom toolbar -->
 <rect x="695.8" y="787.7" width="269.7" height="50.3" fill="#d8e7fd"/>
 <rect x="704.5" y="792.9" width="13.6" height="38.8" fill="url(#gripB)"/>
 <rect x="723.5" y="791" width="42.8" height="41.8" rx="1.5" fill="#dfe9f7" stroke="#ff0000" stroke-width="2"/>
 <rect x="725.8" y="792.6" width="39.2" height="39.2" fill="#999"/>
 <g fill="#fff">
  <rect x="767.5" y="792.6" width="35.6" height="39.2"/>
  <rect x="804.5" y="792.6" width="38.2" height="39.2"/>
  <rect x="844.1" y="792.6" width="38.3" height="39.2"/>
  <rect x="883.4" y="792.6" width="37.6" height="39.2"/>
  <rect x="922" y="792.6" width="38.7" height="39.2"/>
 </g>
 <g fill="none" stroke="#fff" stroke-width="1.8">
  <circle cx="745.1" cy="811.5" r="13.4"/>
  <circle cx="745.1" cy="811.5" r="8.6"/>
 </g>
 <g stroke="#35b035" stroke-width="1.6"><line x1="745.1" y1="804.6" x2="745.1" y2="818.4"/><line x1="738.2" y1="811.5" x2="752" y2="811.5"/></g>
 <g fill="#e8f0e8"><circle cx="743.4" cy="809.8" r="0.7"/><circle cx="746.8" cy="809.8" r="0.7"/><circle cx="743.4" cy="813.2" r="0.7"/><circle cx="746.8" cy="813.2" r="0.7"/></g>
 <g fill="none" stroke="#8a8a8a" stroke-width="1.9">
  <path d="M776,804 L776,820 M778.2,820 L784.8,804 M787.2,804.9 L793.1,804.9 L793.1,819.1 L787.2,819.1 Z"/>
  <path d="M810.3,805 L819.7,805 M815,805 L815,820.5 M821.9,820.5 L821.9,805 L826.3,805 Q827.7,805 827.7,806.4 L827.7,811.3 Q827.7,812.7 826.3,812.7 L821.9,812.7 M829.9,805 L829.9,819.6 L835.5,819.6 Q836.8,819.6 836.8,818.3 L836.8,806.3 Q836.8,805 835.5,805 L829.9,805"/>
  <path d="M894.6,820.5 L894.6,805 L900.3,805 M894.6,812.2 L899,812.2 M903,805 L911.7,805 M907.3,805 L907.3,820.5"/>
  <path d="M927.2,820.5 L927.2,805 L932,805 Q933.3,805 933.3,806.3 L933.3,811 Q933.3,812.3 932,812.3 L927.2,812.3 M930,812.3 L933.6,820.5 M943,805 L938,805 Q936.6,805 936.6,806.4 L936.6,818.6 Q936.6,820 938,820 L943,820 M946.6,820.5 L946.6,805 L951.7,818 L956.8,805 L956.8,820.5"/>
 </g>
 <g fill="#8a8a8a">
  <rect x="850.3" y="806" width="3.7" height="14.7"/>
  <rect x="872.3" y="806" width="3.7" height="14.7"/>
  <rect x="856.3" y="804.4" width="14" height="2.8"/>
  <rect x="860.7" y="802" width="4.3" height="9.3"/>
 </g>
</svg>
<!-- SINGLE PANEL -->
<div class="abs" style="left:226.8px;top:139.8px;width:255.8px;height:345.2px;background:rgba(255,255,255,0.28)"></div>
<svg class="abs" style="left:0;top:0" width="1500" height="841">
 <line x1="226.8" y1="159.2" x2="482.6" y2="159.2" stroke="#d6d2cd" stroke-width="1.1"/>
 <text x="237.6" y="153.9" font-size="14" font-weight="bold" fill="#222">Single</text>
 <rect x="237.4" y="170" width="235.2" height="61" fill="rgba(204,224,255,0.25)" stroke="#d0d0d0" stroke-width="1.1"/>
 <text x="243.2" y="189.2" font-size="14" fill="#444">Threshold (°)</text>
 <line x1="245" y1="210.8" x2="406.5" y2="210.8" stroke="#b0b0b0" stroke-width="4.2" stroke-linecap="round"/>
 <rect x="258" y="198.6" width="14" height="23.8" rx="2.5" fill="#7cb82f"/>
 <rect x="263.8" y="204" width="2.4" height="13" fill="#fff"/>
 <rect x="428.9" y="195.9" width="38.2" height="29.8" rx="2" fill="#fff" stroke="#8c8c8c" stroke-width="1"/>
 <text x="431.8" y="215.6" font-size="14" fill="#333">30</text>
 <g font-size="14" fill="#333">
  <text x="237.4" y="257.4">J1</text>
  <text x="237.4" y="298.7">J2</text>
  <text x="237.4" y="340.1">J3</text>
  <text x="237.4" y="381.4">J4</text>
  <text x="237.4" y="422.7">J5</text>
  <text x="237.4" y="464">J6</text>
 </g>
 <g>
 <circle cx="279.9" cy="252.2" r="15.7" fill="#7cb82f"/>
 <rect x="267.8" y="250.9" width="24.2" height="2.6" fill="#fff"/>
 <line x1="307" y1="252.2" x2="357.3" y2="252.2" stroke="#b0b0b0" stroke-width="3.6" stroke-linecap="round"/>
 <circle cx="329.5" cy="252.2" r="5.3" fill="#fff" stroke="#888" stroke-width="2.2"/>
 <circle cx="384.6" cy="252.2" r="15.7" fill="#7cb82f"/>
 <rect x="372.5" y="250.9" width="24.2" height="2.6" fill="#fff"/>
 <rect x="383.3" y="240.1" width="2.6" height="24.2" fill="#fff"/>
 <rect x="410.9" y="241.5" width="61.5" height="22.4" fill="#fff" stroke="#8c8c8c" stroke-width="1"/>
 <text x="413.6" y="257.3" font-size="14" fill="#333">-15.329</text>
 <circle cx="279.9" cy="293.5" r="15.7" fill="#7cb82f"/>
 <rect x="267.8" y="292.2" width="24.2" height="2.6" fill="#fff"/>
 <line x1="307" y1="293.5" x2="357.3" y2="293.5" stroke="#b0b0b0" stroke-width="3.6" stroke-linecap="round"/>
 <circle cx="329.5" cy="293.5" r="5.3" fill="#fff" stroke="#888" stroke-width="2.2"/>
 <circle cx="384.6" cy="293.5" r="15.7" fill="#7cb82f"/>
 <rect x="372.5" y="292.2" width="24.2" height="2.6" fill="#fff"/>
 <rect x="383.3" y="281.4" width="2.6" height="24.2" fill="#fff"/>
 <rect x="410.9" y="282.8" width="61.5" height="22.4" fill="#fff" stroke="#8c8c8c" stroke-width="1"/>
 <text x="413.6" y="298.6" font-size="14" fill="#333">-67.638</text>
 <circle cx="279.9" cy="334.9" r="15.7" fill="#7cb82f"/>
 <rect x="267.8" y="333.6" width="24.2" height="2.6" fill="#fff"/>
 <line x1="307" y1="334.9" x2="357.3" y2="334.9" stroke="#b0b0b0" stroke-width="3.6" stroke-linecap="round"/>
 <circle cx="343.9" cy="334.9" r="5.3" fill="#fff" stroke="#888" stroke-width="2.2"/>
 <circle cx="384.6" cy="334.9" r="15.7" fill="#7cb82f"/>
 <rect x="372.5" y="333.6" width="24.2" height="2.6" fill="#fff"/>
 <rect x="383.3" y="322.8" width="2.6" height="24.2" fill="#fff"/>
 <rect x="410.9" y="324.2" width="61.5" height="22.4" fill="#fff" stroke="#8c8c8c" stroke-width="1"/>
 <text x="413.6" y="340.0" font-size="14" fill="#333">97.286</text>
 <circle cx="279.9" cy="376.2" r="15.7" fill="#7cb82f"/>
 <rect x="267.8" y="374.9" width="24.2" height="2.6" fill="#fff"/>
 <line x1="307" y1="376.2" x2="357.3" y2="376.2" stroke="#b0b0b0" stroke-width="3.6" stroke-linecap="round"/>
 <circle cx="323.7" cy="376.2" r="5.3" fill="#fff" stroke="#888" stroke-width="2.2"/>
 <circle cx="384.6" cy="376.2" r="15.7" fill="#7cb82f"/>
 <rect x="372.5" y="374.9" width="24.2" height="2.6" fill="#fff"/>
 <rect x="383.3" y="364.1" width="2.6" height="24.2" fill="#fff"/>
 <rect x="410.9" y="365.5" width="61.5" height="22.4" fill="#fff" stroke="#8c8c8c" stroke-width="1"/>
 <text x="413.6" y="381.3" font-size="14" fill="#333">-159.751</text>
 <circle cx="279.9" cy="417.5" r="15.7" fill="#7cb82f"/>
 <rect x="267.8" y="416.2" width="24.2" height="2.6" fill="#fff"/>
 <line x1="307" y1="417.5" x2="357.3" y2="417.5" stroke="#b0b0b0" stroke-width="3.6" stroke-linecap="round"/>
 <circle cx="321.3" cy="417.5" r="5.3" fill="#fff" stroke="#888" stroke-width="2.2"/>
 <circle cx="384.6" cy="417.5" r="15.7" fill="#7cb82f"/>
 <rect x="372.5" y="416.2" width="24.2" height="2.6" fill="#fff"/>
 <rect x="383.3" y="405.4" width="2.6" height="24.2" fill="#fff"/>
 <rect x="410.9" y="406.8" width="61.5" height="22.4" fill="#fff" stroke="#8c8c8c" stroke-width="1"/>
 <text x="413.6" y="422.6" font-size="14" fill="#333">-89.901</text>
 <circle cx="279.9" cy="458.8" r="15.7" fill="#7cb82f"/>
 <rect x="267.8" y="457.5" width="24.2" height="2.6" fill="#fff"/>
 <line x1="307" y1="458.8" x2="357.3" y2="458.8" stroke="#b0b0b0" stroke-width="3.6" stroke-linecap="round"/>
 <circle cx="332" cy="458.8" r="5.3" fill="#fff" stroke="#888" stroke-width="2.2"/>
 <circle cx="384.6" cy="458.8" r="15.7" fill="#7cb82f"/>
 <rect x="372.5" y="457.5" width="24.2" height="2.6" fill="#fff"/>
 <rect x="383.3" y="446.7" width="2.6" height="24.2" fill="#fff"/>
 <rect x="410.9" y="448.1" width="61.5" height="22.4" fill="#fff" stroke="#8c8c8c" stroke-width="1"/>
 <text x="413.6" y="463.9" font-size="14" fill="#333">-0.357</text>
 </g>
</svg>
<!-- POINT PANEL -->
<div class="abs" style="left:556px;top:661.5px;width:550px;height:121px;background:rgba(255,255,255,0.28)"></div>
<svg class="abs" style="left:0;top:0" width="1500" height="841">
 <line x1="556" y1="680.6" x2="1106" y2="680.6" stroke="#d6d2cd" stroke-width="1.1"/>
 <g font-size="14" font-weight="bold" fill="#2a2a2a">
  <text x="566.6" y="675.5">Point</text>
  <text x="567" y="705.5">Teaching point</text>
  <text x="831.6" y="705.5">Sensor teaching points</text>
 </g>
 <g font-size="14" fill="#555">
  <text x="566.4" y="732.1">Prefix</text>
  <text x="566.4" y="765.1">Point name</text>
  <text x="831.6" y="732.2">Sensor</text>
  <text x="831.6" y="765.1">Point name</text>
 </g>
 <g fill="#fff" stroke="#8c8c8c" stroke-width="1">
  <rect x="645.7" y="716.7" width="175.5" height="22.3" rx="2"/>
  <rect x="645.7" y="749.8" width="97.5" height="22.3" rx="2"/>
  <rect x="911.8" y="716.8" width="97.3" height="22.3" rx="2"/>
  <rect x="911.8" y="749.7" width="97.3" height="22.3" rx="2"/>
 </g>
 <polyline points="996.3,726 999.9,729.8 1003.5,726" fill="none" stroke="#222" stroke-width="1.6"/>
 <rect x="758.7" y="749.3" width="62.9" height="23.3" fill="#0a5f94"/>
 <rect x="1024" y="749.2" width="62.4" height="23.2" fill="#0a5f94"/>
 <g font-size="14.5" fill="#fff" text-anchor="middle" stroke="#fff" stroke-width="0.25">
  <text x="789.9" y="765.7">Add</text>
  <text x="1055.2" y="765.7">Add</text>
 </g>
</svg>
<!-- STATUS OVERLAY -->
<div class="abs" style="left:0;top:825px;width:232px;height:16px;background:rgba(200,210,220,0.22);border-top-right-radius:2px"></div>
<svg class="abs" style="left:0;top:0" width="1500" height="841">
 <text x="-1" y="841.8" font-size="12.8" fill="rgba(30,40,50,0.45)">192.168.58.2/index.html#/programteach</text>
</svg>
</body></html>
